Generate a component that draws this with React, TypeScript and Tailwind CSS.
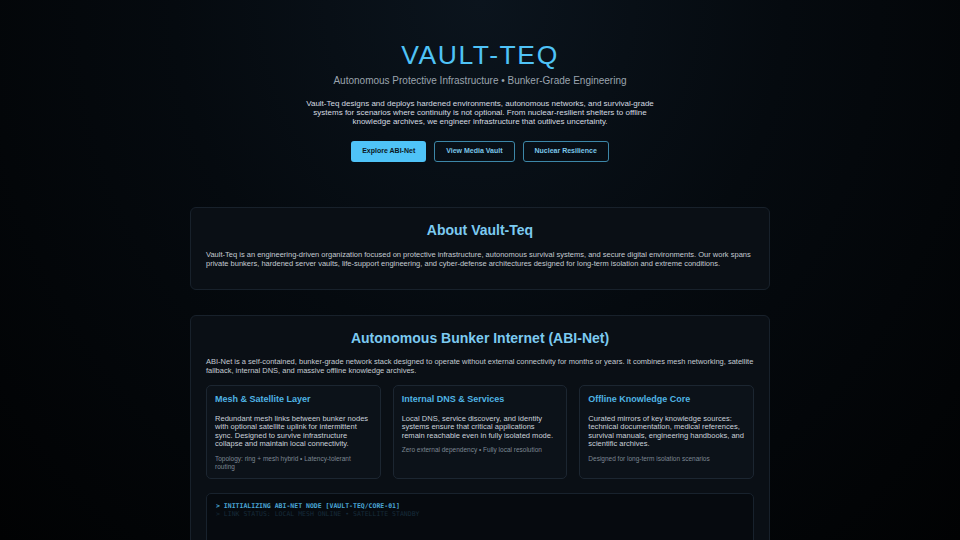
import React from "react";

const sans = { fontFamily: '"Liberation Sans", Arial, sans-serif' };

function FeatureCard({ title, body, meta }: { title: string; body: string; meta: string }) {
  return (
    <div className="rounded-[5px] border border-[#1c2631] bg-[#0c1219] px-[8px] pt-[7px] pb-[7px]">
      <h3 className="text-[9px] font-bold leading-[12px] text-[#4fb4e4]">{title}</h3>
      <p className="mt-[10px] text-[7.55px] leading-[8.5px] text-[#c9d1d9]">{body}</p>
      <p className="mt-[6px] text-[6.5px] leading-[8px] text-[#7c8792]">{meta}</p>
    </div>
  );
}

export default function App() {
  return (
    <div
      className="min-h-[540px] h-[540px] w-full overflow-hidden bg-[radial-gradient(ellipse_at_50%_0%,#0b141d_0%,#050a0f_45%,#010203_100%)]"
      style={sans}
    >
      <header className="flex flex-col items-center pt-[39px] text-center">
        <h1 className="text-[26.5px] font-light leading-[32px] tracking-[1.6px] text-[#4fc3f7]">VAULT-TEQ</h1>
        <p className="mt-[3px] text-[10px] leading-[13px] text-[#9aa4ae]">
          Autonomous Protective Infrastructure • Bunker-Grade Engineering
        </p>
        <p className="mt-[12px] max-w-[356px] text-[8px] leading-[9px] text-[#d5dbe1]">
          Vault-Teq designs and deploys hardened environments, autonomous networks, and survival-grade systems for
          scenarios where continuity is not optional. From nuclear-resilient shelters to offline knowledge archives, we
          engineer infrastructure that outlives uncertainty.
        </p>
        <div className="mt-[15px] flex gap-[8px]">
          <button className="h-[21px] rounded-[3px] bg-[#4fc3f7] px-[11px] text-[7px] font-bold text-[#0b1824]">
            Explore ABI-Net
          </button>
          <button className="h-[21px] rounded-[3px] border border-[#3d87a8] px-[11px] text-[7px] font-bold text-[#7cc7ea]">
            View Media Vault
          </button>
          <button className="h-[21px] rounded-[3px] border border-[#3d87a8] px-[11px] text-[7px] font-bold text-[#7cc7ea]">
            Nuclear Resilience
          </button>
        </div>
      </header>

      <main className="mx-auto mt-[45px] flex w-[580px] flex-col gap-[25px]">
        <section className="rounded-[6px] border border-[#18212b] bg-[#0a0f15] px-[15px] pt-[12px] pb-[21px]">
          <h2 className="text-center text-[14px] font-bold leading-[20px] text-[#7ccaf0]">About Vault-Teq</h2>
          <p className="mt-[9.5px] text-[7.5px] leading-[9px] text-[#c3cad1]">
            Vault-Teq is an engineering-driven organization focused on protective infrastructure, autonomous survival
            systems, and secure digital environments. Our work spans private bunkers, hardened server vaults,
            life-support engineering, and cyber-defense architectures designed for long-term isolation and extreme
            conditions.
          </p>
        </section>

        <section className="rounded-[6px] border border-[#18212b] bg-[#0a0f15] px-[15px] pt-[12px] pb-[20px]">
          <h2 className="text-center text-[14px] font-bold leading-[20px] text-[#7ccaf0]">
            Autonomous Bunker Internet (ABI-Net)
          </h2>
          <p className="mt-[9.5px] text-[7.5px] leading-[9px] text-[#c3cad1]">
            ABI-Net is a self-contained, bunker-grade network stack designed to operate without external connectivity
            for months or years. It combines mesh networking, satellite fallback, internal DNS, and massive offline
            knowledge archives.
          </p>
          <div className="mt-[9.5px] grid grid-cols-3 gap-[12px]">
            <FeatureCard
              title="Mesh & Satellite Layer"
              body="Redundant mesh links between bunker nodes with optional satellite uplink for intermittent sync. Designed to survive infrastructure collapse and maintain local connectivity."
              meta="Topology: ring + mesh hybrid • Latency-tolerant routing"
            />
            <FeatureCard
              title="Internal DNS & Services"
              body="Local DNS, service discovery, and identity systems ensure that critical applications remain reachable even in fully isolated mode."
              meta="Zero external dependency • Fully local resolution"
            />
            <FeatureCard
              title="Offline Knowledge Core"
              body="Curated mirrors of key knowledge sources: technical documentation, medical references, survival manuals, engineering handbooks, and scientific archives."
              meta="Designed for long-term isolation scenarios"
            />
          </div>
          <div
            className="mt-[14px] h-[80px] rounded-[5px] border border-[#18222d] bg-[#060a0f] px-[9px] pt-[8px] text-[6.5px] leading-[8px]"
            style={{ fontFamily: '"DejaVu Sans Mono", "Liberation Mono", monospace' }}
          >
            <div className="font-bold text-[#4aa6d6]">&gt; INITIALIZING ABI-NET NODE [VAULT-TEQ/CORE-01]</div>
            <div className="text-[#162a3a]">&gt; LINK STATUS: LOCAL MESH ONLINE • SATELLITE STANDBY</div>
          </div>
        </section>
      </main>
    </div>
  );
}
